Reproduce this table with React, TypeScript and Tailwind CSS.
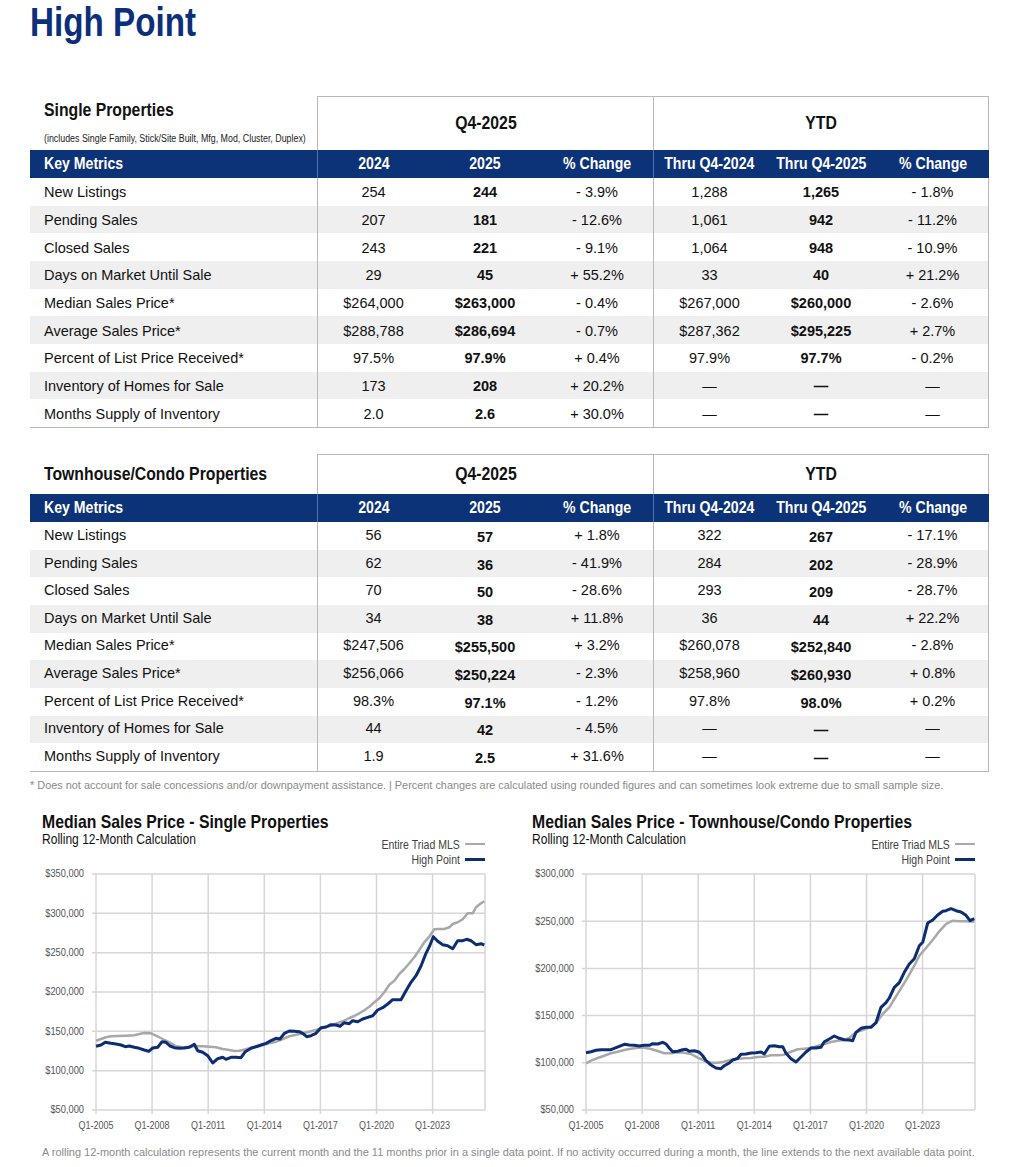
import React from "react";

const ARIAL = "[font-family:'Liberation_Sans',Arial,sans-serif]";

type Row = [string, string, string, string, string, string, string];

const single: Row[] = [
  ["New Listings", "254", "244", "- 3.9%", "1,288", "1,265", "- 1.8%"],
  ["Pending Sales", "207", "181", "- 12.6%", "1,061", "942", "- 11.2%"],
  ["Closed Sales", "243", "221", "- 9.1%", "1,064", "948", "- 10.9%"],
  ["Days on Market Until Sale", "29", "45", "+ 55.2%", "33", "40", "+ 21.2%"],
  ["Median Sales Price*", "$264,000", "$263,000", "- 0.4%", "$267,000", "$260,000", "- 2.6%"],
  ["Average Sales Price*", "$288,788", "$286,694", "- 0.7%", "$287,362", "$295,225", "+ 2.7%"],
  ["Percent of List Price Received*", "97.5%", "97.9%", "+ 0.4%", "97.9%", "97.7%", "- 0.2%"],
  ["Inventory of Homes for Sale", "173", "208", "+ 20.2%", "—", "—", "—"],
  ["Months Supply of Inventory", "2.0", "2.6", "+ 30.0%", "—", "—", "—"],
];

const condo: Row[] = [
  ["New Listings", "56", "57", "+ 1.8%", "322", "267", "- 17.1%"],
  ["Pending Sales", "62", "36", "- 41.9%", "284", "202", "- 28.9%"],
  ["Closed Sales", "70", "50", "- 28.6%", "293", "209", "- 28.7%"],
  ["Days on Market Until Sale", "34", "38", "+ 11.8%", "36", "44", "+ 22.2%"],
  ["Median Sales Price*", "$247,506", "$255,500", "+ 3.2%", "$260,078", "$252,840", "- 2.8%"],
  ["Average Sales Price*", "$256,066", "$250,224", "- 2.3%", "$258,960", "$260,930", "+ 0.8%"],
  ["Percent of List Price Received*", "98.3%", "97.1%", "- 1.2%", "97.8%", "98.0%", "+ 0.2%"],
  ["Inventory of Homes for Sale", "44", "42", "- 4.5%", "—", "—", "—"],
  ["Months Supply of Inventory", "1.9", "2.5", "+ 31.6%", "—", "—", "—"],
];

const headCols = ["2024", "2025", "% Change", "Thru Q4-2024", "Thru Q4-2025", "% Change"];

function Table({
  title,
  subtitle,
  rows,
  tall,
  shiftBold,
}: {
  title: string;
  subtitle?: string;
  rows: Row[];
  tall: boolean;
  shiftBold: boolean;
}) {
  return (
    <div className="w-[959px]">
      <div className={`grid grid-cols-[287px_336px_336px] ${tall ? "h-[54px]" : "h-[40px]"}`}>
        {subtitle ? (
          <div className="flex flex-col pl-[14px] pt-[3px]">
            <div className={`${ARIAL} text-[19px] leading-[22px] font-bold text-[#111]`}>
              <span className="inline-block whitespace-nowrap origin-left scale-x-[0.83]">{title}</span>
            </div>
            <div className={`${ARIAL} text-[10px] leading-[12px] mt-[12px] text-[#222]`}>
              <span className="inline-block whitespace-nowrap origin-left scale-x-[0.886]">{subtitle}</span>
            </div>
          </div>
        ) : (
          <div className={`flex items-center pl-[14px] ${ARIAL} text-[19px] font-bold text-[#111]`}>
            <span className="inline-block whitespace-nowrap origin-left scale-x-[0.83]">{title}</span>
          </div>
        )}
        <div
          className={`border-t border-l border-[#b8b8b8] flex items-center justify-center ${ARIAL} text-[19px] font-bold text-[#111]`}
        >
          <span className="inline-block whitespace-nowrap scale-x-[0.83]">Q4-2025</span>
        </div>
        <div
          className={`border-t border-l border-r border-[#b8b8b8] flex items-center justify-center ${ARIAL} text-[19px] font-bold text-[#111]`}
        >
          <span className="inline-block whitespace-nowrap scale-x-[0.83]">YTD</span>
        </div>
      </div>
      <div className={`grid grid-cols-[287px_repeat(6,112px)] h-[28px] bg-[#0c3278] text-white ${ARIAL} text-[17px] font-bold`}>
        <div className="flex items-center pl-[14px]">
          <span className="inline-block whitespace-nowrap origin-left scale-x-[0.83]">Key Metrics</span>
        </div>
        {headCols.map((c, i) => (
          <div
            key={i}
            className={`flex items-center justify-center ${i === 0 || i === 3 ? "border-l border-[#5570a6]" : ""}`}
          >
            <span className="inline-block whitespace-nowrap scale-x-[0.83]">{c}</span>
          </div>
        ))}
      </div>
      <div className="border-b border-[#b8b8b8]">
        {rows.map((r, ri) => (
          <div
            key={ri}
            className={`grid grid-cols-[287px_repeat(6,112px)] h-[27.67px] ${ARIAL} text-[14.5px] text-[#111] ${
              ri % 2 === 1 ? "bg-[#efefef]" : "bg-white"
            }`}
          >
            <div className={`flex items-center pl-[14px] ${shiftBold ? "" : "pt-[3px]"}`}>{r[0]}</div>
            {r.slice(1).map((v, ci) => {
              const bold = ci === 1 || ci === 4;
              return (
                <div
                  key={ci}
                  className={`flex items-center justify-center ${bold ? "font-bold" : ""} ${
                    bold && shiftBold ? "pt-[4px]" : ""
                  } ${!shiftBold ? "pt-[3px]" : ""} ${ci === 0 || ci === 3 ? "border-l border-[#b8b8b8]" : ""} ${
                    ci === 5 ? "border-r border-[#b8b8b8]" : ""
                  }`}
                >
                  {v}
                </div>
              );
            })}
          </div>
        ))}
      </div>
    </div>
  );
}

type P = [number, number];

const sBlue: P[] = [
  [200, 557], [215, 553], [228, 545], [245, 548], [260, 550], [275, 553], [288, 558], [300, 556], [315, 560],
  [330, 563], [345, 568], [358, 572], [370, 562], [385, 560], [398, 543], [410, 545], [422, 556], [435, 561],
  [450, 563], [465, 562], [480, 560], [495, 551], [505, 570], [520, 575], [535, 585], [550, 607], [565, 594],
  [580, 590], [590, 596], [605, 590], [620, 590], [635, 591], [648, 573], [665, 563], [680, 558], [695, 553],
  [710, 548], [725, 540], [740, 533], [752, 535], [765, 518], [780, 511], [795, 512], [810, 513], [820, 518],
  [832, 528], [845, 525], [860, 518], [875, 501], [890, 499], [905, 492], [920, 493], [932, 497], [945, 486],
  [960, 489], [970, 480], [985, 483], [1000, 475], [1015, 470], [1030, 465], [1045, 448], [1060, 441],
  [1075, 430], [1090, 417], [1105, 417], [1115, 417], [1130, 390], [1145, 365], [1160, 345], [1175, 316],
  [1190, 278], [1200, 258], [1212, 228], [1225, 242], [1240, 252], [1255, 255], [1270, 264], [1285, 240],
  [1300, 240], [1312, 236], [1325, 240], [1340, 252], [1355, 249], [1365, 253],
];

const sGray: P[] = [
  [200, 540], [215, 535], [230, 530], [245, 527], [265, 526], [290, 525], [315, 524], [330, 520], [345, 517],
  [365, 518], [380, 525], [400, 535], [420, 545], [440, 557], [460, 560], [480, 558], [500, 556], [520, 557],
  [540, 558], [560, 560], [580, 565], [600, 568], [615, 571], [630, 570], [650, 566], [670, 560], [690, 556],
  [705, 552], [720, 548], [740, 543], [760, 535], [780, 527], [800, 522], [820, 518], [840, 513], [860, 508],
  [880, 502], [900, 496], [920, 489], [940, 482], [960, 472], [975, 466], [990, 458], [1005, 449], [1020, 438],
  [1035, 425], [1050, 413], [1065, 395], [1080, 372], [1095, 360], [1110, 340], [1125, 325], [1140, 308],
  [1155, 290], [1170, 268], [1185, 245], [1200, 228], [1215, 206], [1230, 205], [1245, 205], [1260, 200],
  [1270, 190], [1285, 185], [1300, 176], [1315, 158], [1330, 158], [1340, 140], [1355, 128], [1365, 122],
];

const cBlue: P[] = [
  [200, 576], [215, 573], [230, 569], [245, 567], [260, 567], [275, 567], [290, 561], [300, 557], [315, 551],
  [330, 553], [345, 554], [360, 556], [375, 554], [390, 554], [400, 549], [415, 550], [430, 545], [440, 550],
  [450, 562], [460, 573], [475, 572], [490, 567], [500, 566], [510, 572], [525, 570], [540, 575], [550, 585],
  [560, 600], [575, 613], [590, 622], [605, 624], [615, 615], [630, 607], [640, 598], [655, 593], [665, 581],
  [680, 580], [695, 577], [710, 576], [725, 574], [735, 580], [750, 557], [765, 555], [780, 558], [790, 558],
  [800, 578], [815, 594], [830, 604], [845, 589], [860, 574], [875, 562], [890, 562], [905, 560], [915, 543],
  [930, 535], [945, 526], [960, 533], [975, 537], [990, 538], [1000, 540], [1010, 515], [1025, 503],
  [1040, 500], [1055, 500], [1070, 486], [1085, 440], [1100, 426], [1110, 412], [1125, 380], [1140, 366],
  [1155, 335], [1170, 310], [1185, 294], [1200, 255], [1210, 245], [1225, 187], [1240, 178], [1255, 163],
  [1270, 152], [1280, 150], [1295, 144], [1310, 150], [1325, 154], [1340, 164], [1352, 180], [1365, 174],
];

const cGray: P[] = [
  [200, 608], [215, 600], [235, 592], [255, 585], [275, 578], [295, 573], [315, 568], [335, 564], [355, 561],
  [375, 561], [395, 565], [415, 571], [435, 578], [455, 578], [475, 575], [495, 576], [515, 580], [535, 591],
  [555, 600], [575, 606], [595, 606], [615, 603], [635, 597], [655, 595], [675, 593], [695, 592], [715, 589],
  [735, 588], [755, 584], [775, 584], [795, 582], [815, 573], [835, 566], [855, 564], [875, 562], [895, 556],
  [915, 550], [935, 544], [955, 540], [975, 538], [990, 532], [1010, 515], [1030, 508], [1050, 500],
  [1070, 488], [1090, 460], [1110, 440], [1130, 407], [1150, 375], [1170, 342], [1185, 315], [1200, 285],
  [1220, 262], [1240, 238], [1260, 212], [1280, 190], [1300, 180], [1320, 182], [1340, 182], [1365, 183],
];

const xLabels = ["Q1-2005", "Q1-2008", "Q1-2011", "Q1-2014", "Q1-2017", "Q1-2020", "Q1-2023"];

function Chart({
  title,
  yLabels,
  gray,
  blue,
}: {
  title: string;
  yLabels: string[];
  gray: P[];
  blue: P[];
}) {
  const L = 60;
  const T = 7;
  const PW = 389;
  const PH = 236;
  const n = yLabels.length - 1;
  const toPts = (arr: P[]) =>
    arr.map(([x, y]) => `${(L + (x - 200) / 3).toFixed(1)},${(T + (y - 40) / 3).toFixed(1)}`).join(" ");
  const ys = 0.93;
  const xsc = 0.9;
  return (
    <div className="w-[460px] flex flex-col">
      <div className="flex h-[55px]">
        <div className="pl-[6px] self-start flex flex-col flex-1 min-w-0">
          <div className={`${ARIAL} text-[19px] leading-[20px] font-bold text-[#111]`}>
            <span className="inline-block whitespace-nowrap origin-left scale-x-[0.83]">{title}</span>
          </div>
          <div className={`${ARIAL} text-[14px] leading-[15px] text-[#111]`}>
            <span className="inline-block whitespace-nowrap origin-left scale-x-[0.86]">Rolling 12-Month Calculation</span>
          </div>
        </div>
        <div
          className={`shrink-0 self-end pr-[11px] ${ARIAL} text-[13px] leading-[15px] text-[#444] flex flex-col items-end`}
        >
          <div className="flex items-center gap-[5px]">
            <span className="inline-block whitespace-nowrap origin-right scale-x-[0.81]">Entire Triad MLS</span>
            <span className="block w-[20px] h-[2px] bg-[#a8a8a8]" />
          </div>
          <div className="flex items-center gap-[5px]">
            <span className="inline-block whitespace-nowrap origin-right scale-x-[0.81]">High Point</span>
            <span className="block w-[20px] h-[3px] bg-[#0c2d72]" />
          </div>
        </div>
      </div>
      <svg width={460} height={266} className={`block ${ARIAL}`}>
        {yLabels.map((l, i) => {
          const y = T + (i * PH) / n;
          return (
            <g key={l}>
              <line x1={L - 4} x2={L + PW} y1={y} y2={y} stroke="#d6d6d6" strokeWidth={1.5} />
              <text
                x={48 / ys}
                y={y + 3.5}
                transform={`scale(${ys},1)`}
                textAnchor="end"
                fontSize={10}
                fill="#555"
              >
                {l}
              </text>
            </g>
          );
        })}
        {xLabels.map((l, i) => {
          const x = L + i * 56.1;
          return (
            <g key={l}>
              <line x1={x} x2={x} y1={T} y2={T + PH + 4} stroke="#d6d6d6" strokeWidth={1.5} />
              <text
                x={x / xsc}
                y={T + PH + 19}
                transform={`scale(${xsc},1)`}
                textAnchor="middle"
                fontSize={10}
                fill="#555"
              >
                {l}
              </text>
            </g>
          );
        })}
        <line x1={L + PW} x2={L + PW} y1={T} y2={T + PH} stroke="#d6d6d6" strokeWidth={1.5} />
        <polyline points={toPts(gray)} fill="none" stroke="#a8a8a8" strokeWidth={2.5} strokeLinejoin="round" />
        <polyline points={toPts(blue)} fill="none" stroke="#0c2d72" strokeWidth={3} strokeLinejoin="round" />
      </svg>
    </div>
  );
}

export default function App() {
  return (
    <div className="w-[1020px] h-[1167px] bg-white overflow-hidden">
      <div className="pl-[30px]">
        <div className={`${ARIAL} text-[40px] leading-[40px] pt-[2px] font-bold text-[#0c2f7a]`}>
          <span className="inline-block whitespace-nowrap origin-left scale-x-[0.83]">High Point</span>
        </div>
        <div className="mt-[54px]">
          <Table
            title="Single Properties"
            subtitle="(includes Single Family, Stick/Site Built, Mfg, Mod, Cluster, Duplex)"
            rows={single}
            tall
            shiftBold={false}
          />
        </div>
        <div className="mt-[26px]">
          <Table title="Townhouse/Condo Properties" rows={condo} tall={false} shiftBold />
        </div>
        <div className={`${ARIAL} text-[10.9px] leading-[14px] text-[#8a8a8a] mt-[6px] whitespace-nowrap`}>
          * Does not account for sale concessions and/or downpayment assistance. | Percent changes are calculated using
          rounded figures and can sometimes look extreme due to small sample size.
        </div>
        <div className="flex gap-[30px] pl-[6px] mt-[20px]">
          <Chart
            title="Median Sales Price - Single Properties"
            yLabels={["$350,000", "$300,000", "$250,000", "$200,000", "$150,000", "$100,000", "$50,000"]}
            gray={sGray}
            blue={sBlue}
          />
          <Chart
            title="Median Sales Price - Townhouse/Condo Properties"
            yLabels={["$300,000", "$250,000", "$200,000", "$150,000", "$100,000", "$50,000"]}
            gray={cGray}
            blue={cBlue}
          />
        </div>
        <div className={`${ARIAL} text-[10.97px] leading-[14px] text-[#8a8a8a] mt-[12px] pl-[12px] whitespace-nowrap`}>
          A rolling 12-month calculation represents the current month and the 11 months prior in a single data point. If
          no activity occurred during a month, the line extends to the next available data point.
        </div>
      </div>
    </div>
  );
}
